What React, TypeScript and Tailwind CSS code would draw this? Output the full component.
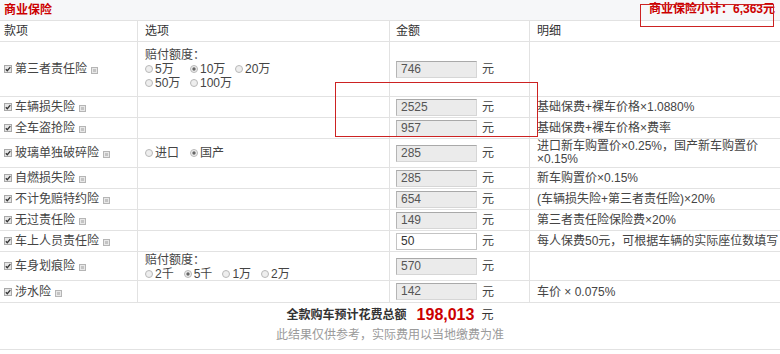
import React from 'react'

const Check = () => (
  <svg width="8" height="8" viewBox="0 0 8 8" className="shrink-0">
    <rect x="0.5" y="0.5" width="7" height="7" fill="#e6e6e6" stroke="#a8a8a8" />
    <path d="M1.8 4.2 L3.3 5.7 L6.3 2.2" fill="none" stroke="#333" strokeWidth="1.3" />
  </svg>
)

const Help = () => (
  <svg width="7" height="7" viewBox="0 0 7 7" className="shrink-0 ml-[4px] mt-[3px]">
    <rect x="0.5" y="0.5" width="6" height="6" fill="#e8e8e8" stroke="#b5b5b5" />
    <rect x="2" y="2" width="3" height="3" fill="#c4c4c4" />
  </svg>
)

const Radio = ({ on }: { on?: boolean }) => (
  <svg width="8" height="8" viewBox="0 0 8 8" className="shrink-0 mr-[2px]">
    <circle cx="4" cy="4" r="3.5" fill="#eee" stroke="#b8b8b8" />
    {on && <circle cx="4" cy="4" r="1.7" fill="#666" />}
  </svg>
)

const Opt = ({ label, on, w }: { label: string; on?: boolean; w?: string }) => (
  <span className={`inline-flex items-center ${w ?? 'w-[45px]'}`}>
    <Radio on={on} />
    <span>{label}</span>
  </span>
)

const Amount = ({ v, editable }: { v: string; editable?: boolean }) => (
  <div className="flex items-center pl-[6px]">
    <div
      className={
        editable
          ? 'w-[81px] h-[17px] pl-[4px] leading-[15px] bg-white border border-[#c4c4c4] text-[#333]'
          : 'w-[81px] h-[17px] pl-[4px] leading-[15px] bg-[#ebebeb] border border-[#d6d6d6] border-t-[#a9a9a9] border-l-[#b5b5b5] text-[#555]'
      }
    >
      {v}
    </div>
    <span className="ml-[5px]">元</span>
  </div>
)

type Row = {
  name: string
  h: string
  opts?: React.ReactNode
  amount: string
  editable?: boolean
  detail?: React.ReactNode
}

const rows: Row[] = [
  {
    name: '第三者责任险',
    h: 'h-[55px]',
    opts: (
      <div className="leading-[14px] pt-[6px]">
        <div>赔付额度：</div>
        <div className="flex">
          <Opt label="5万" />
          <Opt label="10万" on />
          <Opt label="20万" />
        </div>
        <div className="flex">
          <Opt label="50万" />
          <Opt label="100万" />
        </div>
      </div>
    ),
    amount: '746',
  },
  { name: '车辆损失险', h: 'h-[21px]', amount: '2525', detail: '基础保费+裸车价格×1.0880%' },
  { name: '全车盗抢险', h: 'h-[21px]', amount: '957', detail: '基础保费+裸车价格×费率' },
  {
    name: '玻璃单独破碎险',
    h: 'h-[29px]',
    opts: (
      <div className="h-full flex items-center">
        <Opt label="进口" />
        <Opt label="国产" on />
      </div>
    ),
    amount: '285',
    detail: (
      <span className="leading-[13px] block">
        进口新车购置价×0.25%，国产新车购置价
        <br />
        ×0.15%
      </span>
    ),
  },
  { name: '自燃损失险', h: 'h-[21px]', amount: '285', detail: '新车购置价×0.15%' },
  { name: '不计免赔特约险', h: 'h-[21px]', amount: '654', detail: '(车辆损失险+第三者责任险)×20%' },
  { name: '无过责任险', h: 'h-[21px]', amount: '149', detail: '第三者责任险保险费×20%' },
  {
    name: '车上人员责任险',
    h: 'h-[21px]',
    amount: '50',
    editable: true,
    detail: '每人保费50元，可根据车辆的实际座位数填写',
  },
  {
    name: '车身划痕险',
    h: 'h-[29px]',
    opts: (
      <div className="leading-[14px] pt-[1px]">
        <div>赔付额度：</div>
        <div className="flex gap-[10px]">
          <Opt label="2千" w="w-auto" />
          <Opt label="5千" on w="w-auto" />
          <Opt label="1万" w="w-auto" />
          <Opt label="2万" w="w-auto" />
        </div>
      </div>
    ),
    amount: '570',
  },
  { name: '涉水险', h: 'h-[22px]', amount: '142', detail: '车价 × 0.075%' },
]

export default function App() {
  return (
    <div
      className="relative w-[780px] h-[354px] bg-white text-[12px] text-[#444] overflow-hidden"
      style={{ fontFamily: '"Liberation Sans", "Noto Sans CJK SC", sans-serif' }}
    >
      <div className="h-[21px] flex items-center justify-between pl-[4px] pr-[5px] bg-[#f6f7f9] border-b border-[#e2e2e2]">
        <span className="font-bold text-[#cc0000]">商业保险</span>
        <span className="font-bold text-[#cc0000] -mt-[2px]">商业保险小计：6,363元</span>
      </div>

      <div className="h-[21px] flex border-b border-[#e2e2e2] text-[#333]">
        <div className="w-[138px] border-r border-[#e2e2e2] pl-[4px] flex items-center">款项</div>
        <div className="w-[252px] border-r border-[#e2e2e2] pl-[7px] flex items-center">选项</div>
        <div className="w-[140px] border-r border-[#e2e2e2] pl-[6px] flex items-center">金额</div>
        <div className="flex-1 pl-[7px] flex items-center">明细</div>
      </div>

      {rows.map((r) => (
        <div key={r.name} className={`${r.h} flex border-b border-[#e2e2e2]`}>
          <div className="w-[138px] border-r border-[#e2e2e2] pl-[4px] flex items-center">
            <Check />
            <span className="ml-[3px]">{r.name}</span>
            <Help />
          </div>
          <div className="w-[252px] border-r border-[#e2e2e2] pl-[7px]">{r.opts}</div>
          <div className="w-[140px] border-r border-[#e2e2e2] flex items-center">
            <Amount v={r.amount} editable={r.editable} />
          </div>
          <div className="flex-1 pl-[7px] flex items-center whitespace-nowrap">{r.detail}</div>
        </div>
      ))}

      <div className="h-[47px] border-b border-[#e2e2e2] flex flex-col items-center pt-[2px]">
        <div className="h-[20px] flex items-center">
          <span className="font-bold text-[#333]">全款购车预计花费总额</span>
          <span className="font-bold text-[#cc0000] text-[16px] ml-[10px]">198,013</span>
          <span className="ml-[7px] text-[#333]">元</span>
        </div>
        <div className="mt-[1px] text-[#9a9a9a]">此结果仅供参考，实际费用以当地缴费为准</div>
      </div>

      <div className="absolute left-[640px] top-[4px] w-[134px] h-[23px] border border-[#cc2222]" />
      <div className="absolute left-[335px] top-[82px] w-[203px] h-[55px] border border-[#cc2222]" />
    </div>
  )
}
